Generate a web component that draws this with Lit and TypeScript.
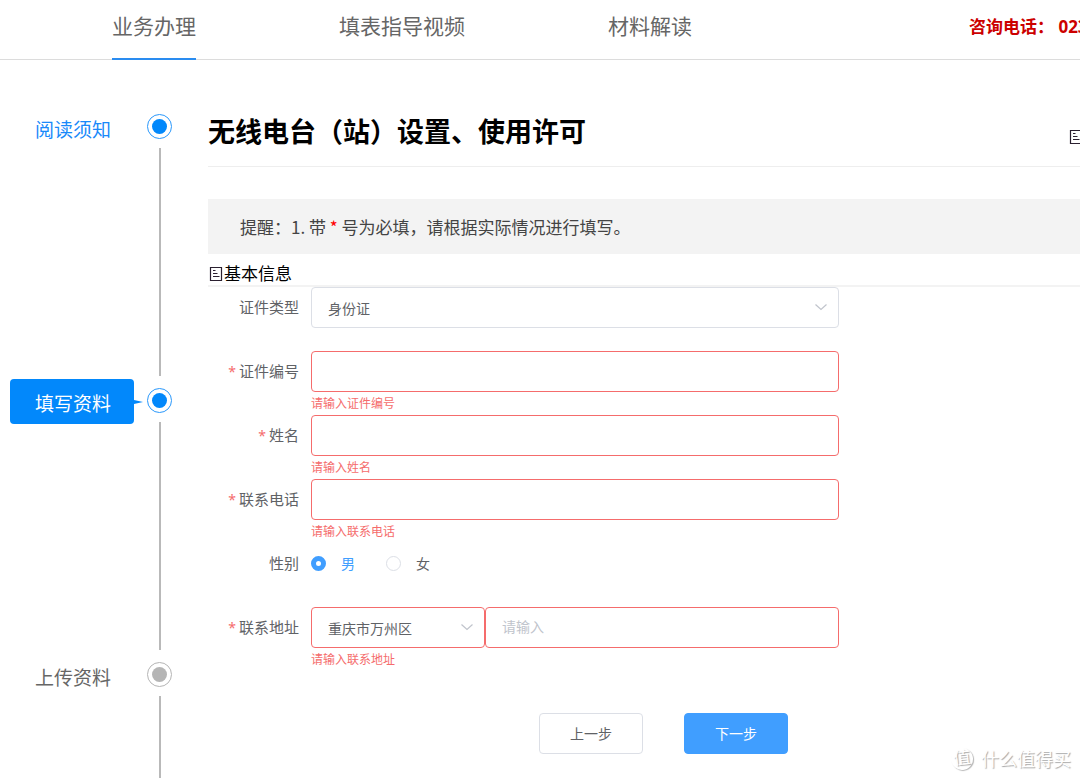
import { LitElement, html, css, svg } from "lit";
import { customElement, property, state } from "lit/decorators.js";
import { classMap } from "lit/directives/class-map.js";

const docIcon = html`<svg class="doc" viewBox="0 0 16 16" width="16" height="16" aria-hidden="true">
  ${svg`<path d="M2.500 1.500h11v13h-11z M5 4.500h2.500 M5 7.500h4.500 M5 10.500h6.500" fill="none" stroke="currentColor" stroke-width="1.200" />`}
</svg>`;

const chevron = html`<svg class="chevron" viewBox="0 0 14 14" width="14" height="14" aria-hidden="true">
  ${svg`<path d="M1.500 4.500L7 9.500l5.500-5" fill="none" stroke="#c0c4cc" stroke-width="1.200" />`}
</svg>`;

@customElement("step-rail")
class StepRail extends LitElement {
  @property({ type: Number }) current = 1;

  private steps = ["阅读须知", "填写资料", "上传资料"];

  static styles = css`
    :host { display: block; }
    ol { list-style: none; margin: 0; padding: 45px 0 0 10px; }
    .step { display: flex; gap: 13px; min-height: 274px; }
    .step:last-child { min-height: 128px; }
    .label {
      position: relative; box-sizing: border-box; width: 124px; height: 45px; padding: 4px 0 0 2px;
      border-radius: 4px; text-align: center; font-size: 19px; line-height: 42px;
      color: #666; align-self: flex-start;
    }
    .done .label { color: #1989fa; }
    .active .label { background: #0288fb; color: #fff; }
    .active .label::after {
      content: ""; position: absolute; left: 100%; top: 21px;
      border: 2px solid transparent; border-left: 9px solid #0288fb; border-right: 0;
    }
    .marker { display: flex; flex-direction: column; align-items: center; gap: 9px; padding: 9px 0 3px; }
    .dot { box-sizing: border-box; width: 25px; height: 25px; border: 1px solid #b5b5b5; border-radius: 50%; padding: 4px; }
    .dot::before { content: ""; display: block; height: 15px; border-radius: 50%; background: #b5b5b5; }
    .done .dot, .active .dot { border-color: #2a98fb; }
    .done .dot::before, .active .dot::before { background: #0288fb; }
    .line { flex: 1; width: 2px; background: #b9b9b9; }
  `;

  render() {
    return html`<ol>
      ${this.steps.map((name, i) => html`
        <li class="step ${classMap({ done: i < this.current, active: i === this.current })}">
          <span class="label">${name}</span>
          <span class="marker"><span class="dot"></span><span class="line"></span></span>
        </li>`)}
    </ol>`;
  }
}

@customElement("app-root")
class AppRoot extends LitElement {
  @state() private gender = "男";

  static styles = css`
    :host {
      display: block; position: relative; min-height: 100vh; overflow: hidden; background: #fff;
      font-family: "Noto Sans", "Noto Sans CJK SC", sans-serif; color: #606266; font-size: 14px;
    }
    .top {
      display: flex; box-sizing: border-box; height: 60px; padding-left: 112px;
      border-bottom: 1px solid #dcdcdc; white-space: nowrap;
    }
    nav { display: flex; gap: 143px; }
    nav a {
      box-sizing: border-box; height: 60px; line-height: 52px; font-size: 21px;
      color: #666; text-decoration: none; border-bottom: 2px solid transparent;
    }
    nav a.current { border-color: #2a8cf0; }
    .phone { margin-left: 277px; font-size: 17px; font-weight: 700; line-height: 54px; color: #c00; }
    .body { display: grid; grid-template-columns: 208px minmax(0, 1fr); }
    .title { display: flex; padding: 52px 0 14px; border-bottom: 1px solid #eee; color: #000; }
    h1 { margin: 0; font-size: 27px; line-height: 40px; font-weight: 700; white-space: nowrap; }
    .title .doc { margin: 17px -4px 0 auto; flex: none; }
    .doc { color: #2b2030; }
    .notice {
      margin: 32px 0 0; padding: 0 32px; background: #f3f3f3; color: #444;
      font-family: "Noto Sans CJK SC", sans-serif; font-size: 17px; line-height: 55px;
    }
    .notice em { font-style: normal; color: #f00; }
    h2 {
      display: flex; align-items: center; margin: 0; padding-top: 8px; border-bottom: 2px solid #f3f3f3;
      font-size: 17px; line-height: 23px; font-weight: 400; color: #000;
    }
    .row {
      display: grid; grid-template-columns: 91px minmax(0, 528px); column-gap: 12px;
      min-height: 64px; line-height: 41px;
    }
    .name { text-align: right; white-space: nowrap; font-size: 15px; }
    .required::before { content: "*"; color: #f56c6c; margin-right: 3px; font-size: 14px; }
    .box { position: relative; display: block; }
    input, select, button { font: inherit; color: inherit; margin: 0; }
    .field {
      display: block; box-sizing: border-box; width: 100%; height: 41px; padding: 0 16px 2px;
      border: 1px solid #dcdfe6; border-radius: 4px; background: #fff; appearance: none; outline: none;
    }
    .field::placeholder { color: #c0c4cc; opacity: 1; }
    .invalid { border-color: #f56c6c; }
    .chevron { position: absolute; right: 11px; top: 13px; pointer-events: none; }
    .error { color: #f56c6c; font-size: 12px; line-height: 23px; }
    .pair { display: grid; grid-template-columns: 174px minmax(0, 1fr); }
    .radios { display: flex; gap: 31px; }
    .radio { display: flex; align-items: center; gap: 15px; height: 41px; }
    .radio input {
      appearance: none; box-sizing: border-box; width: 15px; height: 15px;
      border: 1px solid #dcdfe6; border-radius: 50%; background: #fff;
    }
    .radio input:checked { border: 5px solid #409eff; }
    .radio.on { color: #409eff; }
    .actions { display: flex; gap: 41px; padding: 42px 0 28px 331px; }
    button {
      width: 104px; height: 41px; padding: 0 0 2px; border: 1px solid #dcdfe6; border-radius: 4px; background: #fff;
    }
    .primary { background: #409eff; border-color: #409eff; color: #fff; }
    .mark {
      position: absolute; right: 9px; bottom: 9px; display: flex; align-items: center; gap: 8px;
      font-size: 18px; line-height: 28px; color: #fff; text-shadow: 1px 1px 1px #a8a8a8;
    }
    .badge {
      box-sizing: border-box; width: 22px; height: 22px; border-radius: 50%; text-align: center;
      font-size: 17px; line-height: 20px; box-shadow: 1px 1px 1px #b8b8b8; transform: rotate(-6deg);
    }
  `;

  private textRow(id: string, label: string) {
    return html`<div class="row">
      <label class="name required" for=${id}>${label}</label>
      <div>
        <input class="field invalid" id=${id} type="text" />
        <div class="error">请输入${label}</div>
      </div>
    </div>`;
  }

  private radio(value: string) {
    const on = this.gender === value;
    return html`<label class=${classMap({ radio: true, on })}>
      <input type="radio" name="gender" .checked=${on} @change=${() => (this.gender = value)} />${value}
    </label>`;
  }

  render() {
    return html`
      <header class="top">
        <nav>
          <a class="current" href="#business">业务办理</a>
          <a href="#video">填表指导视频</a>
          <a href="#material">材料解读</a>
        </nav>
        <span class="phone">咨询电话： 023</span>
      </header>
      <div class="body">
        <step-rail .current=${1}></step-rail>
        <main>
          <div class="title"><h1>无线电台（站）设置、使用许可</h1>${docIcon}</div>
          <p class="notice">提醒：1. 带 <em>*</em> 号为必填，请根据实际情况进行填写。</p>
          <h2>${docIcon}基本信息</h2>
          <form @submit=${(e: Event) => e.preventDefault()}>
            <div class="row">
              <label class="name" for="type">证件类型</label>
              <div class="box">
                <select class="field" id="type"><option>身份证</option></select>${chevron}
              </div>
            </div>
            ${this.textRow("number", "证件编号")}
            ${this.textRow("fullname", "姓名")}
            ${this.textRow("tel", "联系电话")}
            <div class="row">
              <span class="name" id="gender-label">性别</span>
              <div class="radios" role="radiogroup" aria-labelledby="gender-label">
                ${this.radio("男")}${this.radio("女")}
              </div>
            </div>
            <div class="row">
              <label class="name required" for="address">联系地址</label>
              <div>
                <div class="pair">
                  <div class="box">
                    <select class="field invalid" aria-label="区县"><option>重庆市万州区</option></select>${chevron}
                  </div>
                  <input class="field invalid" id="address" type="text" placeholder="请输入" />
                </div>
                <div class="error">请输入联系地址</div>
              </div>
            </div>
            <div class="actions">
              <button type="button">上一步</button>
              <button type="submit" class="primary">下一步</button>
            </div>
          </form>
        </main>
      </div>
      <div class="mark"><span class="badge">值</span>什么值得买</div>
    `;
  }
}
